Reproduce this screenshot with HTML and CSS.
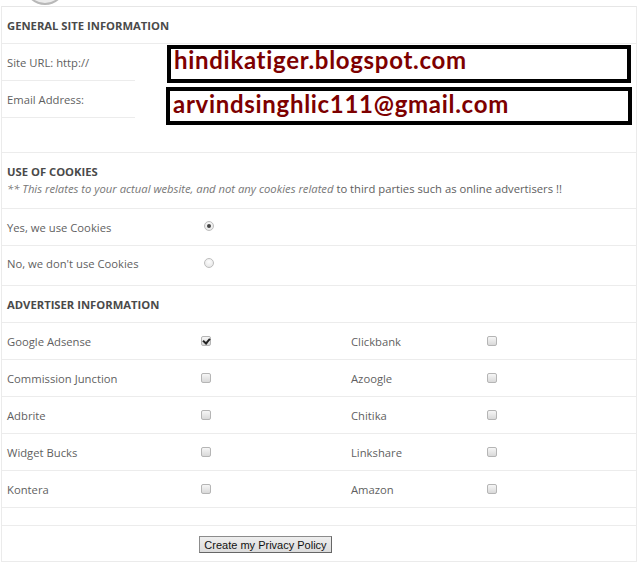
FILE: index.html
```html
<!DOCTYPE html>
<html>
<head>
<meta charset="utf-8">
<link rel="stylesheet" href="styles.css">
</head>
<body>
<div class="page">
  <div class="topstrip"><div class="logo"></div></div>
  <div class="panel">
    <div class="row head"><span class="label bold">GENERAL SITE INFORMATION</span></div>
    <div class="row gen"><span class="label short">Site URL: http://</span></div>
    <div class="row gen"><span class="label short">Email Address:</span></div>
    <div class="row spacer"></div>

    <div class="cookies">
      <div class="label bold">USE OF COOKIES</div>
      <div class="note"><i>** This relates to your actual website, and not any cookies related</i> to third parties such as online advertisers !!</div>
    </div>
    <div class="row opt"><span class="label">Yes, we use Cookies</span><span class="radio on"></span></div>
    <div class="row opt no"><span class="label">No, we don't use Cookies</span><span class="radio"></span></div>

    <div class="row head"><span class="label bold">ADVERTISER INFORMATION</span></div>
    <div class="row adv"><span class="label">Google Adsense</span><span class="check on"></span><span class="label">Clickbank</span><span class="check"></span></div>
    <div class="row adv"><span class="label">Commission Junction</span><span class="check"></span><span class="label">Azoogle</span><span class="check"></span></div>
    <div class="row adv"><span class="label">Adbrite</span><span class="check"></span><span class="label">Chitika</span><span class="check"></span></div>
    <div class="row adv"><span class="label">Widget Bucks</span><span class="check"></span><span class="label">Linkshare</span><span class="check"></span></div>
    <div class="row adv"><span class="label">Kontera</span><span class="check"></span><span class="label">Amazon</span><span class="check"></span></div>
    <div class="row gap"></div>
    <div class="submit"><button class="btn" type="button">Create my Privacy Policy</button></div>
  </div>

  <div class="annot a1">hindikatiger.blogspot.com</div>
  <div class="annot a2">arvindsinghlic111@gmail.com</div>
</div>
</body>
</html>
```

FILE: styles.css
```css
html, body {
  margin: 0;
  padding: 0;
  background: #fff;
}
.page {
  position: relative;
  width: 640px;
  height: 567px;
  overflow: hidden;
  font-family: "Open Sans", "Noto Sans", sans-serif;
  font-size: 11.25px;
  color: #5f5f5f;
}
.topstrip {
  height: 6px;
  overflow: hidden;
}
.logo {
  width: 38px;
  height: 38px;
  margin: -37px 0 0 24px;
  border-radius: 50%;
  border: 2px solid #b8b8b8;
  background: #ececec;
}
.panel {
  margin-left: 1px;
  width: 634px;
  border: 1px solid #ebebeb;
  border-top-color: #e6e6e6;
}
.row {
  display: flex;
  align-items: center;
  height: 36px;
  border-bottom: 1px solid #ececec;
}
.label {
  padding-left: 5px;
}
.bold {
  font-weight: 700;
  color: #4a4a4a;
}
.row.gen {
  border-bottom: none;
  height: 37px;
  align-items: stretch;
}
.row.gen .label {
  display: flex;
  align-items: center;
  width: 133px;
  border-bottom: 1px solid #ececec;
  box-sizing: border-box;
  padding-top: 1px;
}
.row.spacer {
  height: 34px;
}
.cookies {
  padding: 10px 0 11px;
  line-height: 17px;
  border-bottom: 1px solid #ececec;
}
.note {
  padding-left: 5px;
  color: #5e5e5e;
}
.note i {
  color: #777;
}
.row.opt .label {
  width: 194px;
}
.row.no {
  height: 38px;
  padding-top: 1px;
  box-sizing: content-box;
}
.row.no .label, .row.no .radio {
  margin-bottom: 5px;
}
.radio {
  width: 8px;
  height: 8px;
  border-radius: 50%;
  border: 1px solid #bdbdbd;
  background: radial-gradient(circle at 50% 35%, #fdfdfd, #e2e2e2);
  margin-left: 3px;
  margin-top: -2px;
  position: relative;
}
.radio.on::after {
  content: "";
  position: absolute;
  left: 2px;
  top: 2px;
  width: 4px;
  height: 4px;
  border-radius: 50%;
  background: #444;
}
.row.adv {
  display: grid;
  grid-template-columns: 199px 145px 141px 1fr;
  align-items: center;
}
.check {
  width: 8px;
  height: 8px;
  border: 1px solid #b5b5b5;
  border-radius: 2px;
  background: linear-gradient(#f6f6f6, #d9d9d9);
  position: relative;
  margin-top: -1px;
}
.check.on::after {
  content: "";
  position: absolute;
  left: 2px;
  top: 0px;
  width: 3px;
  height: 5px;
  border-right: 2px solid #222;
  border-bottom: 2px solid #222;
  transform: rotate(40deg);
}
.row.gap {
  height: 17px;
}
.submit {
  height: 35px;
  display: flex;
  align-items: center;
  padding-left: 197px;
  padding-top: 2px;
  box-sizing: border-box;
}
.btn {
  width: 133px;
  height: 17px;
  padding: 0;
  font-family: "Liberation Sans", Arial, sans-serif;
  font-size: 11px;
  color: #111;
  background: linear-gradient(#eeeeee, #dcdcdc);
  border: 1px solid #8c8c8c;
  border-right-color: #666;
  border-bottom-color: #666;
  border-radius: 0;
}
.annot {
  position: absolute;
  box-sizing: border-box;
  border: 4px solid #000;
  background: #fff;
  font-family: Lato, "Liberation Sans", sans-serif;
  font-weight: 700;
  font-size: 24px;
  letter-spacing: 0.7px;
  line-height: 22px;
  color: #7d0000;
  padding-left: 3px;
  white-space: nowrap;
}
.a1 {
  left: 167px;
  top: 45px;
  width: 464px;
  height: 38px;
}
.a2 {
  left: 166px;
  top: 87px;
  width: 466px;
  height: 38px;
  padding-top: 2px;
}
```
